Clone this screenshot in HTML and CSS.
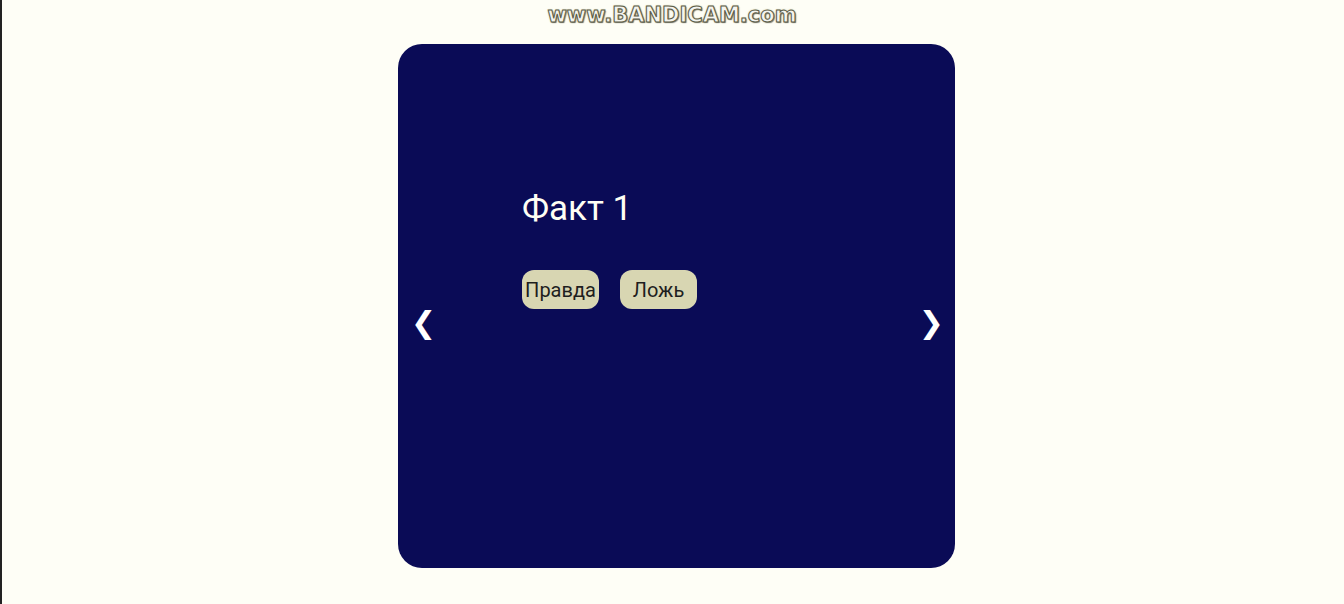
FILE: index.html
```html
<!DOCTYPE html>
<html lang="ru">
<head>
<meta charset="utf-8">
<link rel="stylesheet" href="styles.css">
</head>
<body>
<div class="page">
  <div class="watermark">www.BANDICAM.com</div>
  <div class="stage">
    <div class="card">
      <button class="nav nav-prev">&#10094;</button>
      <div class="content">
        <h2 class="fact">Факт 1</h2>
        <div class="answers">
          <button class="answer">Правда</button>
          <button class="answer">Ложь</button>
        </div>
      </div>
      <button class="nav nav-next">&#10095;</button>
    </div>
  </div>
</div>
</body>
</html>
```
FILE: styles.css
```css
html, body {
  margin: 0;
  padding: 0;
  height: 100%;
}
body {
  background: #fefef6;
  font-family: Roboto, "Liberation Sans", Arial, sans-serif;
  overflow: hidden;
}
.page {
  height: 604px;
  border-left: 2px solid #222;
  box-sizing: border-box;
  position: relative;
}
.watermark {
  position: absolute;
  top: 3px;
  left: 545px;
  width: 250px;
  text-align: center;
  font-family: "DejaVu Sans", sans-serif;
  font-weight: bold;
  font-size: 21px;
  letter-spacing: 0;
  color: #f4f4ee;
  -webkit-text-stroke: 1px #5c5c48;
  text-shadow: 0 0 2px #9a9a60, 1px 1px 1px #777;
}
.stage {
  padding-top: 44px;
  padding-left: 396px;
}
.card {
  position: relative;
  width: 557px;
  height: 524px;
  background: #0a0b56;
  border-radius: 24px;
  box-sizing: border-box;
  padding: 145px 0 0 124px;
}
.content {
  display: flex;
  flex-direction: column;
  align-items: flex-start;
}
.fact {
  margin: 0;
  font-weight: 400;
  font-size: 35px;
  line-height: 40px;
  color: #fffff4;
}
.answers {
  display: flex;
  gap: 21px;
  margin-top: 41px;
}
.answer {
  width: 77px;
  height: 39px;
  padding: 0;
  border: none;
  border-radius: 12px;
  background: #d8d6b2;
  color: #1e1e1e;
  font-family: Roboto, "Liberation Sans", Arial, sans-serif;
  font-size: 20px;
}
.nav {
  position: absolute;
  top: 257px;
  background: none;
  border: none;
  padding: 0;
  color: #ffffff;
  font-family: "DejaVu Sans", sans-serif;
  font-size: 30px;
  line-height: 44px;
  font-weight: bold;
}
.nav-prev { left: 13px; }
.nav-next { right: 11px; }
```
